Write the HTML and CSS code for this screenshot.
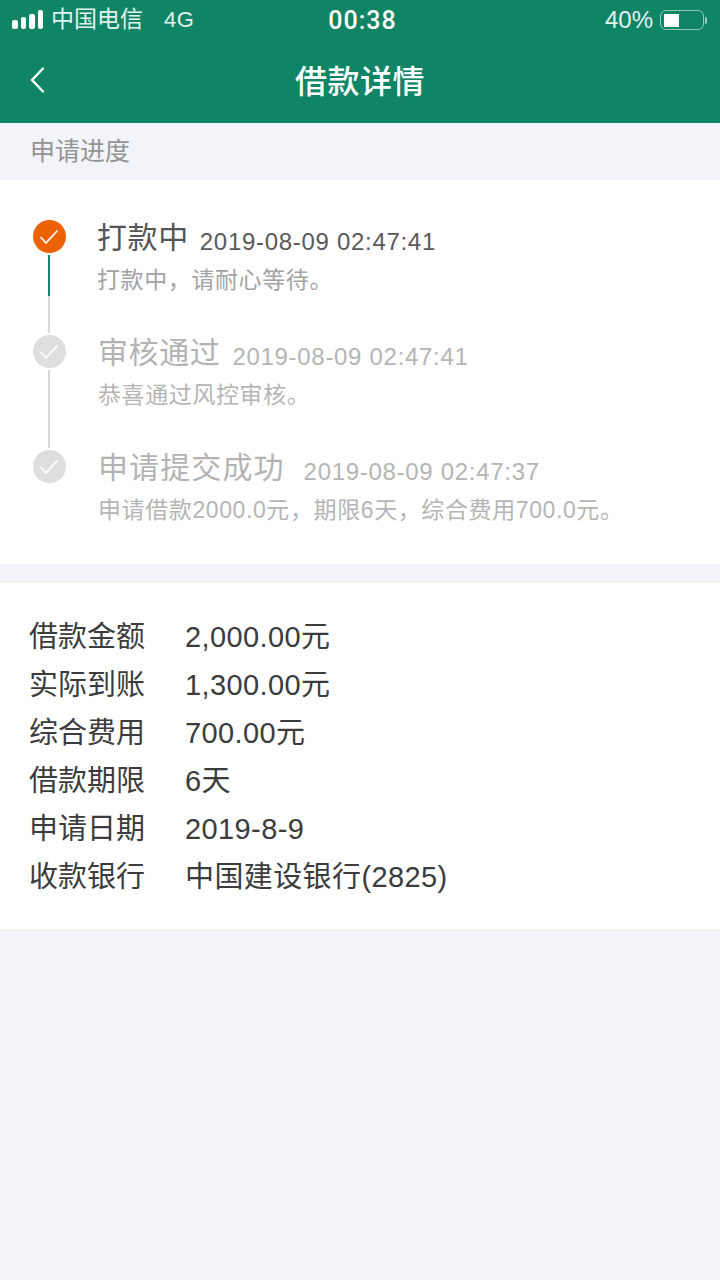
FILE: index.html
```html
<!DOCTYPE html>
<html lang="zh-CN">
<head>
    <meta charset="UTF-8">
    <meta name="viewport" content="width=device-width, initial-scale=1.0">
    <title>借款详情</title>
    <link rel="stylesheet" href="styles.css">
</head>
<body>
    <header class="header">
        <!-- Status bar -->
        <div class="status-bar">
            <div class="status-left">
                <div class="signal">
                    <span class="bar bar-1"></span>
                    <span class="bar bar-2"></span>
                    <span class="bar bar-3"></span>
                    <span class="bar bar-4"></span>
                </div>
                <span class="carrier">中国电信</span>
                <span class="network">4G</span>
            </div>
            <div class="status-time">00:38</div>
            <div class="status-right">
                <span class="percent">40%</span>
                <div class="battery"><span class="battery-level"></span></div>
                <span class="battery-cap"></span>
            </div>
        </div>

        <!-- Title bar -->
        <div class="title-bar">
            <svg class="back-icon" width="18" height="28" viewBox="0 0 18 28">
                <path d="M15 2.5 L4 14 L15 25.5" fill="none" stroke="#fff" stroke-width="2.4" stroke-linecap="round"/>
            </svg>
            <h1>借款详情</h1>
        </div>
    </header>

    <div class="section-label">申请进度</div>

    <section class="timeline">
        <div class="step step-active">
            <div class="marker">
                <div class="circle">
                    <svg width="20" height="16" viewBox="0 0 20 16"><path d="M1.5 8 L7 14 L18.5 1.5" fill="none" stroke="#fff" stroke-width="1.8"/></svg>
                </div>
                <div class="line line-progress"></div>
            </div>
            <div class="step-text">
                <div class="step-title"><span class="step-name">打款中</span><span class="step-date">2019-08-09 02:47:41</span></div>
                <p class="step-desc">打款中，请耐心等待。</p>
            </div>
        </div>
        <div class="step step-review">
            <div class="marker">
                <div class="circle">
                    <svg width="20" height="16" viewBox="0 0 20 16"><path d="M1.5 8 L7 14 L18.5 1.5" fill="none" stroke="#fff" stroke-width="1.8"/></svg>
                </div>
                <div class="line"></div>
            </div>
            <div class="step-text">
                <div class="step-title"><span class="step-name">审核通过</span><span class="step-date">2019-08-09 02:47:41</span></div>
                <p class="step-desc">恭喜通过风控审核。</p>
            </div>
        </div>
        <div class="step step-last">
            <div class="marker">
                <div class="circle">
                    <svg width="20" height="16" viewBox="0 0 20 16"><path d="M1.5 8 L7 14 L18.5 1.5" fill="none" stroke="#fff" stroke-width="1.8"/></svg>
                </div>
            </div>
            <div class="step-text">
                <div class="step-title"><span class="step-name">申请提交成功</span><span class="step-date">2019-08-09 02:47:37</span></div>
                <p class="step-desc">申请借款2000.0元，期限6天，综合费用700.0元。</p>
            </div>
        </div>
    </section>

    <section class="details">
        <div class="row"><span class="row-label">借款金额</span><span>2,000.00元</span></div>
        <div class="row"><span class="row-label">实际到账</span><span>1,300.00元</span></div>
        <div class="row"><span class="row-label">综合费用</span><span>700.00元</span></div>
        <div class="row"><span class="row-label">借款期限</span><span>6天</span></div>
        <div class="row"><span class="row-label">申请日期</span><span>2019-8-9</span></div>
        <div class="row"><span class="row-label">收款银行</span><span>中国建设银行(2825)</span></div>
    </section>
</body>
</html>
```

FILE: styles.css
```css
body {
    font-family: "Liberation Sans", "Noto Sans CJK SC", sans-serif;
    margin: 0;
    background-color: #f2f4f9;
    color: #333;
}

.header {
    height: 123px;
    background: #0f8565;
    color: white;
}

.status-bar {
    height: 40px;
    padding: 0 13px 0 12px;
    display: grid;
    grid-template-columns: 1fr auto 1fr;
    align-items: center;
    font-size: 23px;
    color: #e4f2ee;
}

.status-left {
    display: flex;
    align-items: center;
}

.signal {
    display: flex;
    align-items: flex-end;
    gap: 3px;
    height: 19px;
    margin-bottom: 1px;
}

.bar {
    width: 5.5px;
    border-radius: 2px;
    background: white;
}

.bar-1 { height: 9px; }
.bar-2 { height: 12px; }
.bar-3 { height: 15px; }
.bar-4 { height: 19px; }

.carrier {
    margin-left: 8px;
    line-height: 40px;
    height: 40px;
    margin-top: -2px;
}

.network {
    margin-left: 21px;
    font-size: 22px;
    letter-spacing: 0.5px;
}

.status-time {
    margin-left: 6px;
    font-family: Roboto, sans-serif;
    font-size: 25px;
    font-weight: 500;
    letter-spacing: 1px;
    color: white;
}

.status-right {
    display: flex;
    align-items: center;
    justify-content: flex-end;
}

.percent {
    font-size: 24px;
}

.battery {
    width: 42px;
    height: 18px;
    margin-left: 7px;
    border: 1.5px solid rgba(255,255,255,0.55);
    border-radius: 6px;
}

.battery-level {
    display: block;
    width: 15px;
    height: 13px;
    margin: 2.5px 0 0 2.5px;
    background: white;
}

.battery-cap {
    width: 2px;
    height: 7px;
    margin-left: 1px;
    border-radius: 0 2px 2px 0;
    background: rgba(255,255,255,0.6);
}

.title-bar {
    height: 83px;
    position: relative;
    display: flex;
    align-items: center;
    justify-content: center;
}

.title-bar h1 {
    margin: 0 0 6px;
    font-size: 32px;
    font-weight: 500;
    letter-spacing: 0.5px;
}

.back-icon {
    position: absolute;
    left: 28px;
    top: 26px;
}

.section-label {
    height: 57px;
    padding-left: 30px;
    line-height: 57px;
    font-size: 25px;
    color: #939393;
    box-sizing: border-box;
}

.timeline {
    height: 384px;
    padding: 40px 32px 0 33px;
    background: white;
    box-sizing: border-box;
}

.step {
    display: flex;
    height: 115px;
}

.marker {
    width: 32px;
    display: flex;
    flex-direction: column;
    align-items: center;
}

.circle {
    width: 33px;
    height: 33px;
    flex: none;
    border-radius: 50%;
    background: #dedede;
    display: flex;
    align-items: center;
    justify-content: center;
}

.step-active .circle {
    background: #ec6200;
}

.line {
    width: 2px;
    flex: 1;
    margin: 2px 0;
    background: #d8d8d8;
}

.line-progress {
    background: linear-gradient(#16876a 0, #16876a 41px, #d8d8d8 41px);
}

.step-text {
    margin-left: 33px;
    margin-top: -3px;
}

.step-title {
    display: flex;
    align-items: center;
    height: 42px;
    line-height: 42px;
}

.step-name {
    font-size: 30px;
    letter-spacing: 0.6px;
    color: #b3b3b3;
}

.step-date {
    margin-left: 11px;
    padding-top: 7px;
    font-size: 24px;
    letter-spacing: 0.7px;
    color: #b5b5b5;
}

.step-desc {
    margin: 0;
    padding-top: 4px;
    font-size: 23px;
    line-height: 34px;
    letter-spacing: 0.6px;
    color: #b5b5b5;
}

.step-active .step-text {
    margin-left: 32px;
}

.step-active .step-name {
    color: #555;
}

.step-active .step-date {
    color: #5a5a5a;
}

.step-active .step-desc {
    color: #a3a3a3;
}

.step-review .step-date {
    margin-left: 12px;
}

.step-last .step-name {
    letter-spacing: 1.1px;
}

.step-last .step-date {
    margin-left: 19px;
}

.details {
    margin-top: 19px;
    height: 346px;
    padding: 30px 29px 0;
    background: white;
    box-sizing: border-box;
    font-size: 29px;
    letter-spacing: 0.4px;
    color: #3c3c3c;
}

.row {
    display: flex;
    height: 48px;
    line-height: 48px;
}

.row-label {
    width: 156px;
    letter-spacing: 0;
}
```
